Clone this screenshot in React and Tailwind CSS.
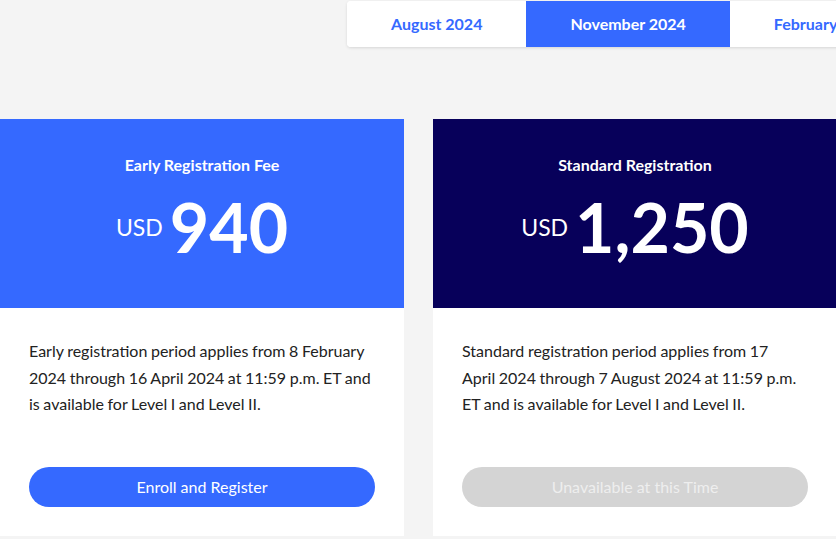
import React from 'react';

const tabs = ['August 2024', 'November 2024', 'February 2025'];

const plans = [
  {
    title: 'Early Registration Fee',
    price: '940',
    headerBg: 'bg-[#3569ff]',
    text: 'Early registration period applies from 8 February 2024 through 16 April 2024 at 11:59 p.m. ET and is available for Level I and Level II.',
    button: 'Enroll and Register',
    available: true,
  },
  {
    title: 'Standard Registration',
    price: '1,250',
    headerBg: 'bg-[#07005a]',
    text: 'Standard registration period applies from 17 April 2024 through 7 August 2024 at 11:59 p.m. ET and is available for Level I and Level II.',
    button: 'Unavailable at this Time',
    available: false,
  },
];

const PriceCard = ({ plan }) => (
  <div className="w-[404px] shrink-0 bg-white flex flex-col">
    {/* Coloured header with price */}
    <div className={`${plan.headerBg} h-[189px] flex flex-col items-center pt-[35px] text-white`}>
      <h3 className="text-[16px] font-bold leading-[22px]">{plan.title}</h3>
      <div className="flex items-center mt-[12px]">
        <span className="text-[23px] leading-none mr-[7px]">USD</span>
        <span className="text-[68px] font-bold leading-[78px]">{plan.price}</span>
      </div>
    </div>

    {/* Description and action */}
    <div className="h-[228px] pl-[29px] pr-[29px] pt-[30px] pb-[29px] flex flex-col justify-between">
      <p className="pr-[4px] text-[16px] leading-[26.5px] [word-spacing:-0.5px] text-[#222]">{plan.text}</p>
      {plan.available ? (
        <button className="h-10 w-full rounded-full bg-[#3569ff] text-white text-[16px]">{plan.button}</button>
      ) : (
        <button disabled className="h-10 w-full rounded-full bg-[#d4d4d4] text-[#eeeeee] text-[16px]">{plan.button}</button>
      )}
    </div>
  </div>
);

export default function App() {
  return (
    <div className="w-[836px] h-[539px] overflow-hidden bg-[#f4f4f4] font-['Lato',sans-serif]">
      {/* Session tabs */}
      <div className="pl-[347px] pt-[1px]">
        <div className="flex w-max bg-white rounded-[4px] shadow-[0_1px_3px_rgba(0,0,0,0.12)] overflow-hidden">
          {tabs.map((tab, i) => (
            <button
              key={tab}
              className={`h-[46px] px-[44px] text-[16px] font-bold ${i === 1 ? 'bg-[#3569ff] text-white' : 'bg-white text-[#3569ff]'}`}
            >
              {tab}
            </button>
          ))}
        </div>
      </div>

      {/* Pricing cards */}
      <div className="flex gap-[29px] mt-[72px]">
        {plans.map(plan => <PriceCard key={plan.title} plan={plan} />)}
      </div>
    </div>
  );
}
